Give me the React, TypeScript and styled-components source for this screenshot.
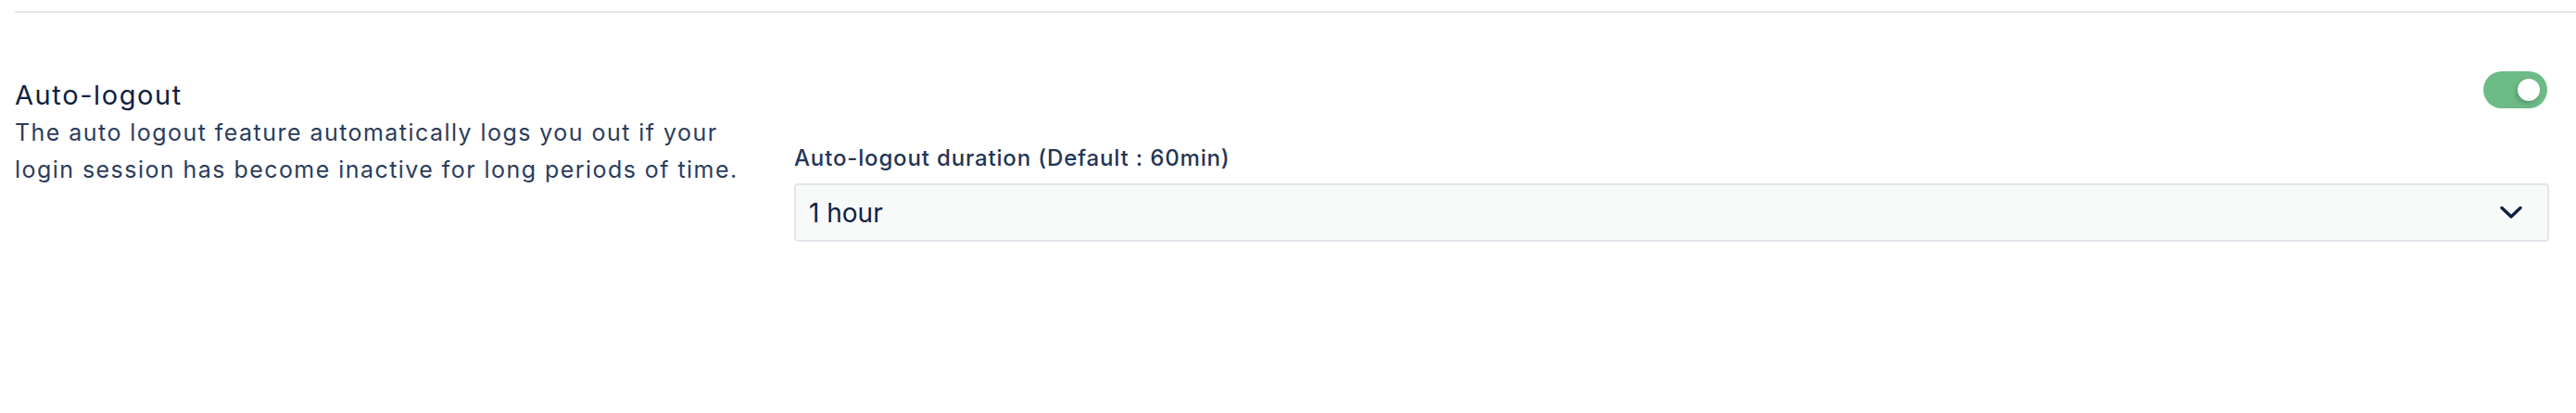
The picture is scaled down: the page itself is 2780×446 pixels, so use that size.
import React, { useState } from 'react';
import styled, { createGlobalStyle } from 'styled-components';

const GlobalStyle = createGlobalStyle`
  html, body {
    margin: 0;
    padding: 0;
    background: #ffffff;
    font-family: Inter, "Noto Sans", "Liberation Sans", sans-serif;
  }
`;

const Page = styled.div`
  padding-top: 12px;
  padding-left: 16px;
`;

const Divider = styled.div`
  height: 2px;
  background: #e3e8ee;
`;

const Section = styled.section`
  display: grid;
  grid-template-columns: 800px 1fr;
  column-gap: 41px;
  padding: 63px 29px 0 0;
`;

const Info = styled.div`
  padding-top: 9px;
`;

const Title = styled.h3`
  margin: 0 0 3px;
  font-size: 29px;
  line-height: 34px;
  font-weight: 400;
  letter-spacing: 0.055em;
  color: #0e1f40;
`;

const Description = styled.p`
  margin: 0;
  font-size: 25px;
  line-height: 40px;
  letter-spacing: 0.058em;
  color: #2b3c5c;
`;

const Controls = styled.div`
  display: flex;
  flex-direction: column;
`;

const ToggleRow = styled.div`
  display: flex;
  justify-content: flex-end;
  padding-right: 2px;
`;

const Toggle = styled.button<{ $on: boolean }>`
  width: 69px;
  height: 40px;
  border: none;
  padding: 0 8px;
  border-radius: 20px;
  background: ${p => (p.$on ? '#6dbb86' : '#cfd6de')};
  display: flex;
  align-items: center;
  justify-content: ${p => (p.$on ? 'flex-end' : 'flex-start')};
  cursor: pointer;

  span {
    width: 24px;
    height: 24px;
    border-radius: 50%;
    background: #ffffff;
    box-shadow: -2px 3px 5px rgba(0, 0, 0, 0.18);
  }
`;

const FieldLabel = styled.label`
  margin-top: 39px;
  font-size: 24px;
  line-height: 29px;
  font-weight: 500;
  letter-spacing: 0.035em;
  color: #233556;
`;

const SelectBox = styled.button`
  margin-top: 13px;
  height: 63px;
  box-sizing: border-box;
  display: flex;
  align-items: center;
  justify-content: space-between;
  padding: 0 27px 0 14px;
  background: #f8fafa;
  border: 2px solid #e2e6eb;
  border-radius: 4px;
  font-family: inherit;
  font-size: 28px;
  color: #0e1f40;
  text-align: left;
  cursor: pointer;
`;

const Chevron = () => (
    <svg width="24" height="15" viewBox="0 0 24 15" fill="none">
        <polyline points="2,2.5 12,12 22,2.5" stroke="#0e1f40" strokeWidth="3.4" strokeLinecap="round" strokeLinejoin="round" />
    </svg>
);

export default function App() {
    const [enabled, setEnabled] = useState(true);

    return (
        <>
            <GlobalStyle />
            <Page>
                <Divider />
                <Section>
                    <Info>
                        <Title>Auto-logout</Title>
                        <Description>
                            The auto logout feature automatically logs you out if your login session has become inactive for long periods of time.
                        </Description>
                    </Info>
                    <Controls>
                        <ToggleRow>
                            <Toggle $on={enabled} onClick={() => setEnabled(!enabled)} aria-pressed={enabled}>
                                <span />
                            </Toggle>
                        </ToggleRow>
                        <FieldLabel>Auto-logout duration (Default : 60min)</FieldLabel>
                        <SelectBox type="button">
                            1 hour
                            <Chevron />
                        </SelectBox>
                    </Controls>
                </Section>
            </Page>
        </>
    );
}
